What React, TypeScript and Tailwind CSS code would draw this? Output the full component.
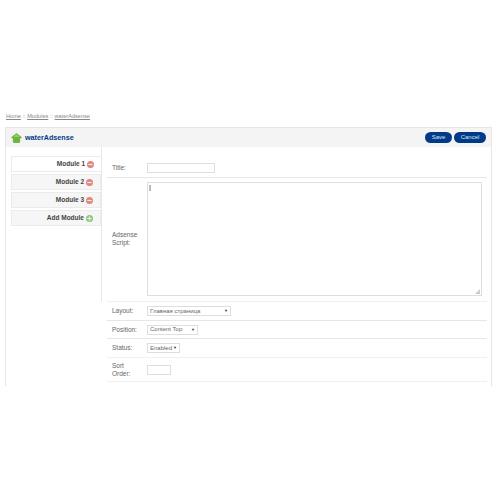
import type { ReactNode } from 'react'

const TABS = [
  { label: 'Module 1', add: false, active: true },
  { label: 'Module 2', add: false, active: false },
  { label: 'Module 3', add: false, active: false },
  { label: 'Add Module', add: true, active: false },
]

function RoundIcon({ add }: { add: boolean }) {
  return (
    <svg width="7" height="7" viewBox="0 0 8 8" className="ml-[2px] shrink-0">
      <circle cx="4" cy="4" r="4" fill={add ? '#86c77e' : '#e2847c'} />
      <rect x="1.5" y="3.3" width="5" height="1.4" fill="#f6e9e6" />
      {add && <rect x="3.3" y="1.5" width="1.4" height="5" fill="#f6e9e6" />}
    </svg>
  )
}

function Row({ label, h, children, strong }: { label: string; h: string; children: ReactNode; strong?: boolean }) {
  return (
    <div className={`flex items-center ${h} border-b ${strong ? 'border-[#e6e6e6]' : 'border-[#f0f0f0]'}`}>
      <div className="w-[35px] ml-[5px] pr-[8px] leading-[8px] text-[#666]">{label}</div>
      {children}
    </div>
  )
}

function FakeSelect({ w, text }: { w: string; text: string }) {
  return (
    <div className={`${w} h-[10px] border border-[#dedede] bg-white flex items-center justify-between pl-[2px] pr-[2px] text-[6px] text-[#666]`}>
      <span>{text}</span>
      <span className="text-[4px] text-[#333]">▼</span>
    </div>
  )
}

export default function App() {
  return (
    <div className="w-[500px] h-[500px] bg-white overflow-hidden font-['Liberation_Sans',sans-serif] text-[6.5px] pt-[113px]">
      <div className="pl-[6px] h-[14px] text-[5.6px] leading-[7px] text-[#888]">
        <span className="underline">Home</span> :: <span className="underline">Modules</span> :: <span className="underline">waterAdsense</span>
      </div>

      <div className="ml-[5px] w-[487px] h-[259px] border border-[#e6e6e6] border-b-0">
        <div className="h-[19px] bg-[#f4f4f4] flex items-center justify-between pl-[5px] pr-[5px]">
          <div className="flex items-center gap-[3px] mt-[1px]">
            <svg width="11" height="10" viewBox="0 0 12 11">
              <path d="M6 0.5 L11.5 5 L9.5 5.5 L9.5 10 Q9.5 10.5 9 10.5 L3 10.5 Q2.5 10.5 2.5 10 L2.5 5.5 L0.5 5 Z" fill="#6db33f" stroke="#6db33f" strokeLinejoin="round" />
              <path d="M6 1.5 L9.5 4.5 L2.5 4.5 Z" fill="#9ad06a" />
            </svg>
            <span className="text-[7.2px] font-bold text-[#003a88]">waterAdsense</span>
          </div>
          <div className="flex gap-[2px] mb-[1px]">
            <div className="w-[27px] h-[11px] rounded-[6px] bg-[#003a88] text-[#dfe8f5] text-[6px] flex items-center justify-center">Save</div>
            <div className="w-[32px] h-[11px] rounded-[6px] bg-[#003a88] text-[#dfe8f5] text-[6px] flex items-center justify-center">Cancel</div>
          </div>
        </div>

        <div className="flex">
          <div className="w-[95px] h-[240px] pt-[9px] pl-[5px] flex flex-col gap-[2px]">
            {TABS.map(t => (
              <div
                key={t.label}
                className={`w-[90px] h-[16px] border border-[#ebebeb] flex items-center justify-end pr-[7px] text-[6.5px] font-bold text-[#444] ${t.active ? 'bg-white border-r-0' : 'bg-[#f6f6f6]'}`}
              >
                {t.label}
                <RoundIcon add={t.add} />
              </div>
            ))}
          </div>

          <div className="flex-1 min-w-0">
            <div className="flex h-[155px]">
              <div className="w-[6px] border-l border-[#e8e8e8]" />
              <div className="flex-1 pr-[4px]">
                <Row label="Title:" h="h-[31px] pt-[11px]" strong>
                  <div className="w-[68px] h-[10px] border border-[#dedede] bg-white" />
                </Row>
                <Row label="Adsense Script:" h="h-[124px] pb-[1px]">
                  <div className="relative w-[335px] h-[114px] border border-[#dedede] bg-white pl-[1px] pt-[2px]">
                    <div className="w-[2px] h-[6px] bg-[#bbb]" />
                    <svg width="5" height="5" viewBox="0 0 5 5" className="absolute right-[1px] bottom-[1px]">
                      <path d="M5 0 L5 5 L0 5 Z" fill="#ccc" />
                    </svg>
                  </div>
                </Row>
              </div>
            </div>
            <div className="pl-[6px] pr-[4px]">
              <Row label="Layout:" h="h-[19px]" strong>
                <FakeSelect w="w-[84px]" text="Главная страница" />
              </Row>
              <Row label="Position:" h="h-[18px]" strong>
                <FakeSelect w="w-[51px]" text="Content Top" />
              </Row>
              <Row label="Status:" h="h-[19px]">
                <FakeSelect w="w-[33px]" text="Enabled" />
              </Row>
              <Row label="Sort Order:" h="h-[24px]">
                <div className="w-[24px] h-[10px] border border-[#dedede] bg-white" />
              </Row>
            </div>
          </div>
        </div>
      </div>
    </div>
  )
}
